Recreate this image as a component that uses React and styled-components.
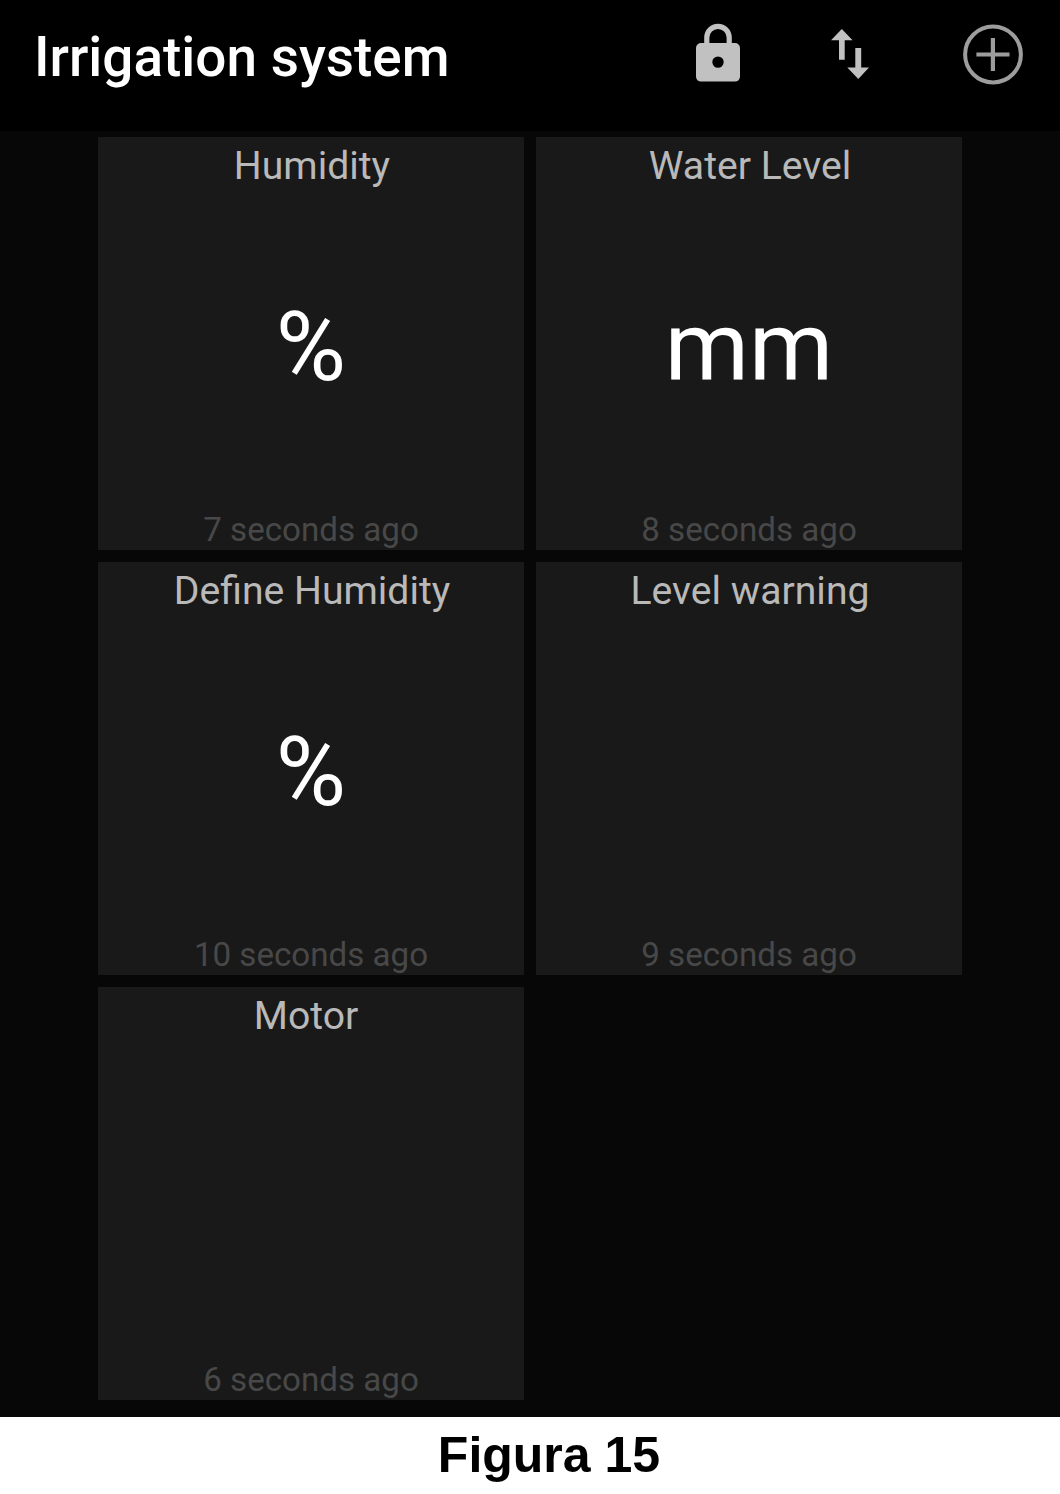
import React from "react";
import styled, { createGlobalStyle } from "styled-components";

const GlobalStyle = createGlobalStyle`
  * { box-sizing: border-box; }
  body { margin: 0; background: #ffffff; }
`;

const Page = styled.div`
  width: 1060px;
  height: 1494px;
  display: flex;
  flex-direction: column;
  overflow: hidden;
  font-family: Roboto, "Liberation Sans", sans-serif;
`;

const Toolbar = styled.header`
  height: 131px;
  flex: none;
  display: flex;
  align-items: flex-start;
  justify-content: space-between;
  padding: 22px 36px 0 34px;
  background: #000000;
`;

const Title = styled.h1`
  margin: 0;
  font-size: 54.9px;
  line-height: 70px;
  font-weight: 500;
  color: #ffffff;
  white-space: nowrap;
`;

const Actions = styled.div`
  display: flex;
  align-items: flex-start;
`;

const IconButton = styled.button`
  display: block;
  flex: none;
  padding: 0;
  border: 0;
  background: none;
  margin-left: ${(p) => p.$gap}px;
  height: 64px;
  svg { display: block; }
`;

const Board = styled.main`
  height: 1286px;
  flex: none;
  display: grid;
  grid-template-columns: 426px 426px;
  grid-auto-rows: 413px;
  gap: 12px;
  padding: 6px 98px 0;
  background: #070707;
`;

const Tile = styled.section`
  display: flex;
  flex-direction: column;
  align-items: center;
  background: #191919;
`;

const TileName = styled.h2`
  margin: 0;
  padding-left: 2px;
  padding-right: ${(p) => p.$shift || 0}px;
  height: 58px;
  flex: none;
  font-size: 39.15px;
  line-height: 58px;
  font-weight: 400;
  color: #b9b9b9;
  white-space: nowrap;
`;

const Value = styled.div`
  flex: 1;
  display: flex;
  align-items: center;
  padding-bottom: 12px;
  font-size: 96px;
  line-height: 116px;
  color: #ffffff;
`;

const Age = styled.div`
  height: 40px;
  flex: none;
  font-size: 33.15px;
  line-height: 40px;
  color: #484848;
  white-space: nowrap;
`;

const Caption = styled.footer`
  flex: 1;
  padding: 10px 0 0 38px;
  background: #ffffff;
  color: #000000;
  text-align: center;
  font: 700 50px/56px "Liberation Sans", Arial, sans-serif;
`;

const tiles = [
  { name: "Humidity", value: "%", age: "7 seconds ago" },
  { name: "Water Level", value: "mm", age: "8 seconds ago" },
  { name: "Define Humidity", value: "%", age: "10 seconds ago" },
  { name: "Level warning", value: "", age: "9 seconds ago" },
  { name: "Motor", value: "", age: "6 seconds ago", shift: 12 },
];

export default function App() {
  return (
    <Page>
      <GlobalStyle />
      <Toolbar>
        <Title>Irrigation system</Title>
        <Actions>
          <IconButton $gap={0} aria-label="Lock">
            <svg width="44" height="64" viewBox="696 22 44 64">
              <path
                fill="#c1c1c1"
                fillRule="evenodd"
                d="M701 43H704.200V37.500a13.800 13.800 0 0 1 27.600 0V43H735a5 5 0 0 1 5 5V76.600a5 5 0 0 1-5 5H701a5 5 0 0 1-5-5V48a5 5 0 0 1 5-5ZM709.400 43H726.600V37.500a8.600 8.600 0 0 0-17.200 0ZM718 56.400a5.700 5.700 0 1 0 0 11.400a5.700 5.700 0 1 0 0-11.400Z"
              />
            </svg>
          </IconButton>
          <IconButton $gap={90} aria-label="Reorder">
            <svg width="40" height="64" viewBox="830 22 40 64">
              <path fill="#c1c1c1" d="M841.800 29L852.600 40.300H844.700V59.700H839V40.300H831ZM855.300 48H861.200V67.600H869L858.300 79L847.300 67.600H855.300Z" />
            </svg>
          </IconButton>
          <IconButton $gap={92} aria-label="Add">
            <svg width="62" height="64" viewBox="962 22 62 64" fill="none" stroke="#9d9d9d">
              <circle cx="993" cy="54.500" r="27.900" strokeWidth="4" />
              <path strokeWidth="4.200" d="M976.400 54.500H1009.500M992.900 38V71" />
            </svg>
          </IconButton>
        </Actions>
      </Toolbar>
      <Board>
        {tiles.map((t) => (
          <Tile key={t.name}>
            <TileName $shift={t.shift}>{t.name}</TileName>
            <Value>{t.value}</Value>
            <Age>{t.age}</Age>
          </Tile>
        ))}
      </Board>
      <Caption>Figura 15</Caption>
    </Page>
  );
}
